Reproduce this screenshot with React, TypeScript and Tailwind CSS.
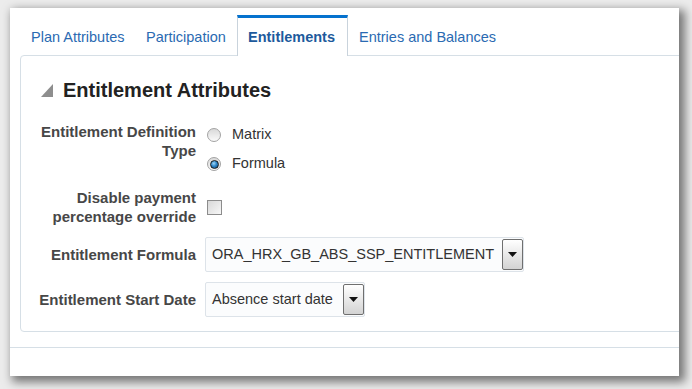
import React from "react";

function Tab({ label, width, active = false }: { label: string; width: string; active?: boolean }) {
  if (active) {
    return (
      <div className={`${width} relative z-10 -mb-px h-[41px] flex items-center pl-[10px] bg-white border-l border-r border-t-[3px] border-l-[#c9d3dc] border-r-[#c9d3dc] border-t-[#0572ce] text-[14.5px] font-bold text-[#1d5a9c] leading-[20px] whitespace-nowrap`}>
        {label}
      </div>
    );
  }
  return (
    <div className={`${width} h-[40px] flex items-center pl-[11px] pt-[3px] text-[14.5px] text-[#2a6ab2] leading-[20px] whitespace-nowrap`}>
      {label}
    </div>
  );
}

function Radio({ checked }: { checked?: boolean }) {
  return (
    <div className="w-[14px] h-[14px] rounded-full border border-[#a3a3a3] bg-gradient-to-b from-[#d9d9d9] to-[#fafafa] flex items-center justify-center">
      {checked && (
        <div className="w-[9px] h-[9px] rounded-full border border-[#1c1c1c] bg-[radial-gradient(circle_at_40%_35%,#9fd6f7_0%,#2e86c8_45%,#0b3d6e_100%)]" />
      )}
    </div>
  );
}

function Select({ value, width }: { value: string; width: string }) {
  return (
    <div className={`${width} h-[35px] flex items-stretch border border-[#dde3e9] bg-[#fbfcfd] rounded-[2px]`}>
      <div className="flex-1 flex items-center pl-[6px] text-[14.5px] text-[#333] whitespace-nowrap">{value}</div>
      <div className="w-[21px] my-px mr-0 border border-[#6f6f6f] rounded-[2px] bg-gradient-to-b from-[#ffffff] to-[#d3d3d3] flex items-center justify-center">
        <svg width="9" height="5" viewBox="0 0 9 5">
          <polygon points="0,0 9,0 4.5,5" fill="#111" />
        </svg>
      </div>
    </div>
  );
}

export default function App() {
  return (
    <div className="w-[692px] h-[389px] bg-[#ececec] pt-[8px] pl-[10px] font-['Liberation_Sans',Arial,sans-serif]">
      <div className="w-[669px] h-[368px] bg-white overflow-hidden flex flex-col shadow-[4px_4px_9px_2px_rgba(0,0,0,0.5)]">
        {/* tabs */}
        <div className="h-[47px] flex items-end pl-[10px]">
          <Tab label="Plan Attributes" width="w-[115px]" />
          <Tab label="Participation" width="w-[102px]" />
          <Tab label="Entitlements" width="w-[111px]" active />
          <Tab label="Entries and Balances" width="w-[161px]" />
        </div>
        {/* content box */}
        <div className="ml-[10px] w-[700px] h-[277px] shrink-0 border border-[#d6dfe6] rounded-tl-[4px] rounded-bl-[4px] pt-[22px]">
          <div className="flex items-center h-[24px] pl-[20px]">
            <svg width="12" height="13" viewBox="0 0 12 13" className="mr-[10px]">
              <polygon points="12,0 12,13 0,13" fill="#8e8e8e" />
            </svg>
            <span className="text-[20px] font-bold text-[#222] leading-[24px]">Entitlement Attributes</span>
          </div>

          <div className="mt-[20px] flex flex-col">
            {/* row 1 */}
            <div className="flex">
              <div className="w-[175px] text-right text-[15px] font-bold text-[#474747] leading-[18.5px] pt-[1px]">
                Entitlement Definition
                <br />
                Type
              </div>
              <div className="ml-[11px] pt-[1px] flex flex-col gap-[5px]">
                <div className="h-[24px] flex items-center gap-[11px]">
                  <Radio />
                  <span className="text-[14.5px] text-[#333]">Matrix</span>
                </div>
                <div className="h-[24px] flex items-center gap-[11px]">
                  <Radio checked />
                  <span className="text-[14.5px] text-[#333]">Formula</span>
                </div>
              </div>
            </div>
            {/* row 2 */}
            <div className="flex items-center mt-[13px]">
              <div className="w-[175px] text-right text-[15px] font-bold text-[#474747] leading-[18.5px]">
                Disable payment
                <br />
                percentage override
              </div>
              <div className="ml-[11px] w-[15px] h-[15px] border border-[#8c8c8c] bg-gradient-to-br from-[#d8d8d8] to-[#f7f7f7]" />
            </div>
            {/* row 3 */}
            <div className="flex items-center mt-[11px]">
              <div className="w-[175px] text-right text-[15px] font-bold text-[#474747] leading-[18px]">Entitlement Formula</div>
              <div className="ml-[9px]">
                <Select value="ORA_HRX_GB_ABS_SSP_ENTITLEMENT" width="w-[319px]" />
              </div>
            </div>
            {/* row 4 */}
            <div className="flex items-center mt-[10px]">
              <div className="w-[175px] text-right text-[15px] font-bold text-[#474747] leading-[18px]">Entitlement Start Date</div>
              <div className="ml-[9px]">
                <Select value="Absence start date" width="w-[160px]" />
              </div>
            </div>
          </div>
        </div>
        <div className="mt-[15px] border-t border-[#d6dfe6]" />
      </div>
    </div>
  );
}
